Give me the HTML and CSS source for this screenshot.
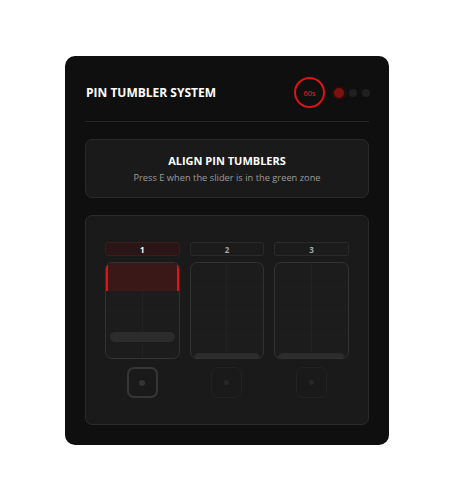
FILE: index.html
```html
<!DOCTYPE html>
<html>
<head>
<meta charset="utf-8">
<link rel="stylesheet" href="styles.css">
</head>
<body>
<div class="card">
  <div class="header">
    <div class="title">PIN TUMBLER SYSTEM</div>
    <div class="status">
      <div class="timer">60s</div>
      <div class="dots">
        <span class="dot active"></span>
        <span class="dot"></span>
        <span class="dot"></span>
      </div>
    </div>
  </div>
  <div class="info">
    <div class="info-title">ALIGN PIN TUMBLERS</div>
    <div class="info-sub">Press E when the slider is in the green zone</div>
  </div>
  <div class="game">
    <div class="pins">
      <div class="pin current">
        <div class="label">1</div>
        <div class="track">
          <div class="zone"></div>
          <div class="slider mid"></div>
        </div>
        <div class="btn"><span></span></div>
      </div>
      <div class="pin">
        <div class="label">2</div>
        <div class="track">
          <div class="slider bottom"></div>
        </div>
        <div class="btn"><span></span></div>
      </div>
      <div class="pin">
        <div class="label">3</div>
        <div class="track">
          <div class="slider bottom"></div>
        </div>
        <div class="btn"><span></span></div>
      </div>
    </div>
  </div>
</div>
</body>
</html>
```
FILE: styles.css
```css
* { box-sizing: border-box; }
body {
  margin: 0;
  background: #ffffff;
  font-family: "Open Sans", "Noto Sans", sans-serif;
}
.card {
  width: 324px;
  margin: 56px 0 0 65px;
  background: #0f0f0f;
  border-radius: 10px;
  padding: 20px 20px 20px 20px;
}
.header {
  display: flex;
  align-items: center;
  justify-content: space-between;
  height: 46px;
  padding-bottom: 12px;
  border-bottom: 1px solid #262626;
}
.title {
  color: #ffffff;
  font-weight: 700;
  font-size: 12px;
  letter-spacing: 0;
  padding-left: 1px;
}
.status {
  display: flex;
  align-items: center;
  gap: 9px;
}
.timer {
  width: 31px;
  height: 31px;
  border: 2px solid #d81515;
  border-radius: 50%;
  display: flex;
  align-items: center;
  justify-content: center;
  color: #e02828;
  font-size: 7.5px;
}
.dots {
  display: flex;
  align-items: center;
  gap: 5px;
  margin-right: -1px;
}
.dot {
  width: 8px;
  height: 8px;
  border-radius: 50%;
  background: #1f1f1f;
}
.dot.active {
  width: 10px;
  height: 10px;
  background: #7a1212;
  box-shadow: 0 0 4px #5a0c0c;
}
.info {
  margin-top: 17px;
  height: 59px;
  background: #1a1a1a;
  border: 1px solid #2a2a2a;
  border-radius: 7px;
  display: flex;
  flex-direction: column;
  align-items: center;
  justify-content: center;
  gap: 3px;
}
.info-title {
  color: #ffffff;
  font-weight: 700;
  font-size: 11px;
}
.info-sub {
  color: #9a9a9a;
  font-size: 9.3px;
}
.game {
  margin-top: 17px;
  height: 210px;
  background: #1a1a1a;
  border: 1px solid #2a2a2a;
  border-radius: 7px;
  padding: 26px 19px 0 19px;
}
.pins {
  display: grid;
  grid-template-columns: repeat(3, 1fr);
  gap: 10px;
}
.pin {
  display: flex;
  flex-direction: column;
  align-items: center;
}
.label {
  width: 100%;
  height: 14px;
  border: 1px solid #2a2a2a;
  background: #1b1b1b;
  border-radius: 3px;
  color: #a8a8a8;
  font-size: 8px;
  font-weight: 700;
  display: flex;
  align-items: center;
  justify-content: center;
}
.pin.current .label {
  background: #2a1616;
  border-color: #3e1b1b;
  color: #ffffff;
}
.track {
  position: relative;
  margin-top: 6px;
  width: 100%;
  height: 97px;
  border: 1px solid #323232;
  border-radius: 7px;
  overflow: hidden;
  background-color: #1c1c1c;
  background-image:
    linear-gradient(to right, transparent calc(50% - 0.5px), #222222 calc(50% - 0.5px), #222222 calc(50% + 0.5px), transparent calc(50% + 0.5px)),
    linear-gradient(to bottom, transparent 23px, #1f1f1f 23px, #1f1f1f 24px, transparent 24px);
  background-size: 100% 100%, 100% 24px;
}
.zone {
  height: 28px;
  background: #3a1818;
  border-left: 2px solid #e01414;
  border-right: 2px solid #e01414;
}
.slider {
  position: absolute;
  background: #2c2c2c;
}
.slider.mid {
  left: 4px;
  right: 4px;
  top: 69px;
  height: 10px;
  border-radius: 5px;
}
.slider.bottom {
  left: 3px;
  right: 3px;
  bottom: 0;
  height: 5px;
  border-radius: 5px 5px 0 0;
}
.btn {
  margin-top: 8px;
  width: 31px;
  height: 31px;
  border: 2px solid #363636;
  border-radius: 7px;
  display: flex;
  align-items: center;
  justify-content: center;
}
.btn span {
  width: 6px;
  height: 6px;
  border-radius: 50%;
  background: #333333;
}
.pin:not(.current) .btn {
  border: 1px solid #222222;
}
.pin:not(.current) .btn span {
  width: 5px;
  height: 5px;
  background: #272727;
}
```
